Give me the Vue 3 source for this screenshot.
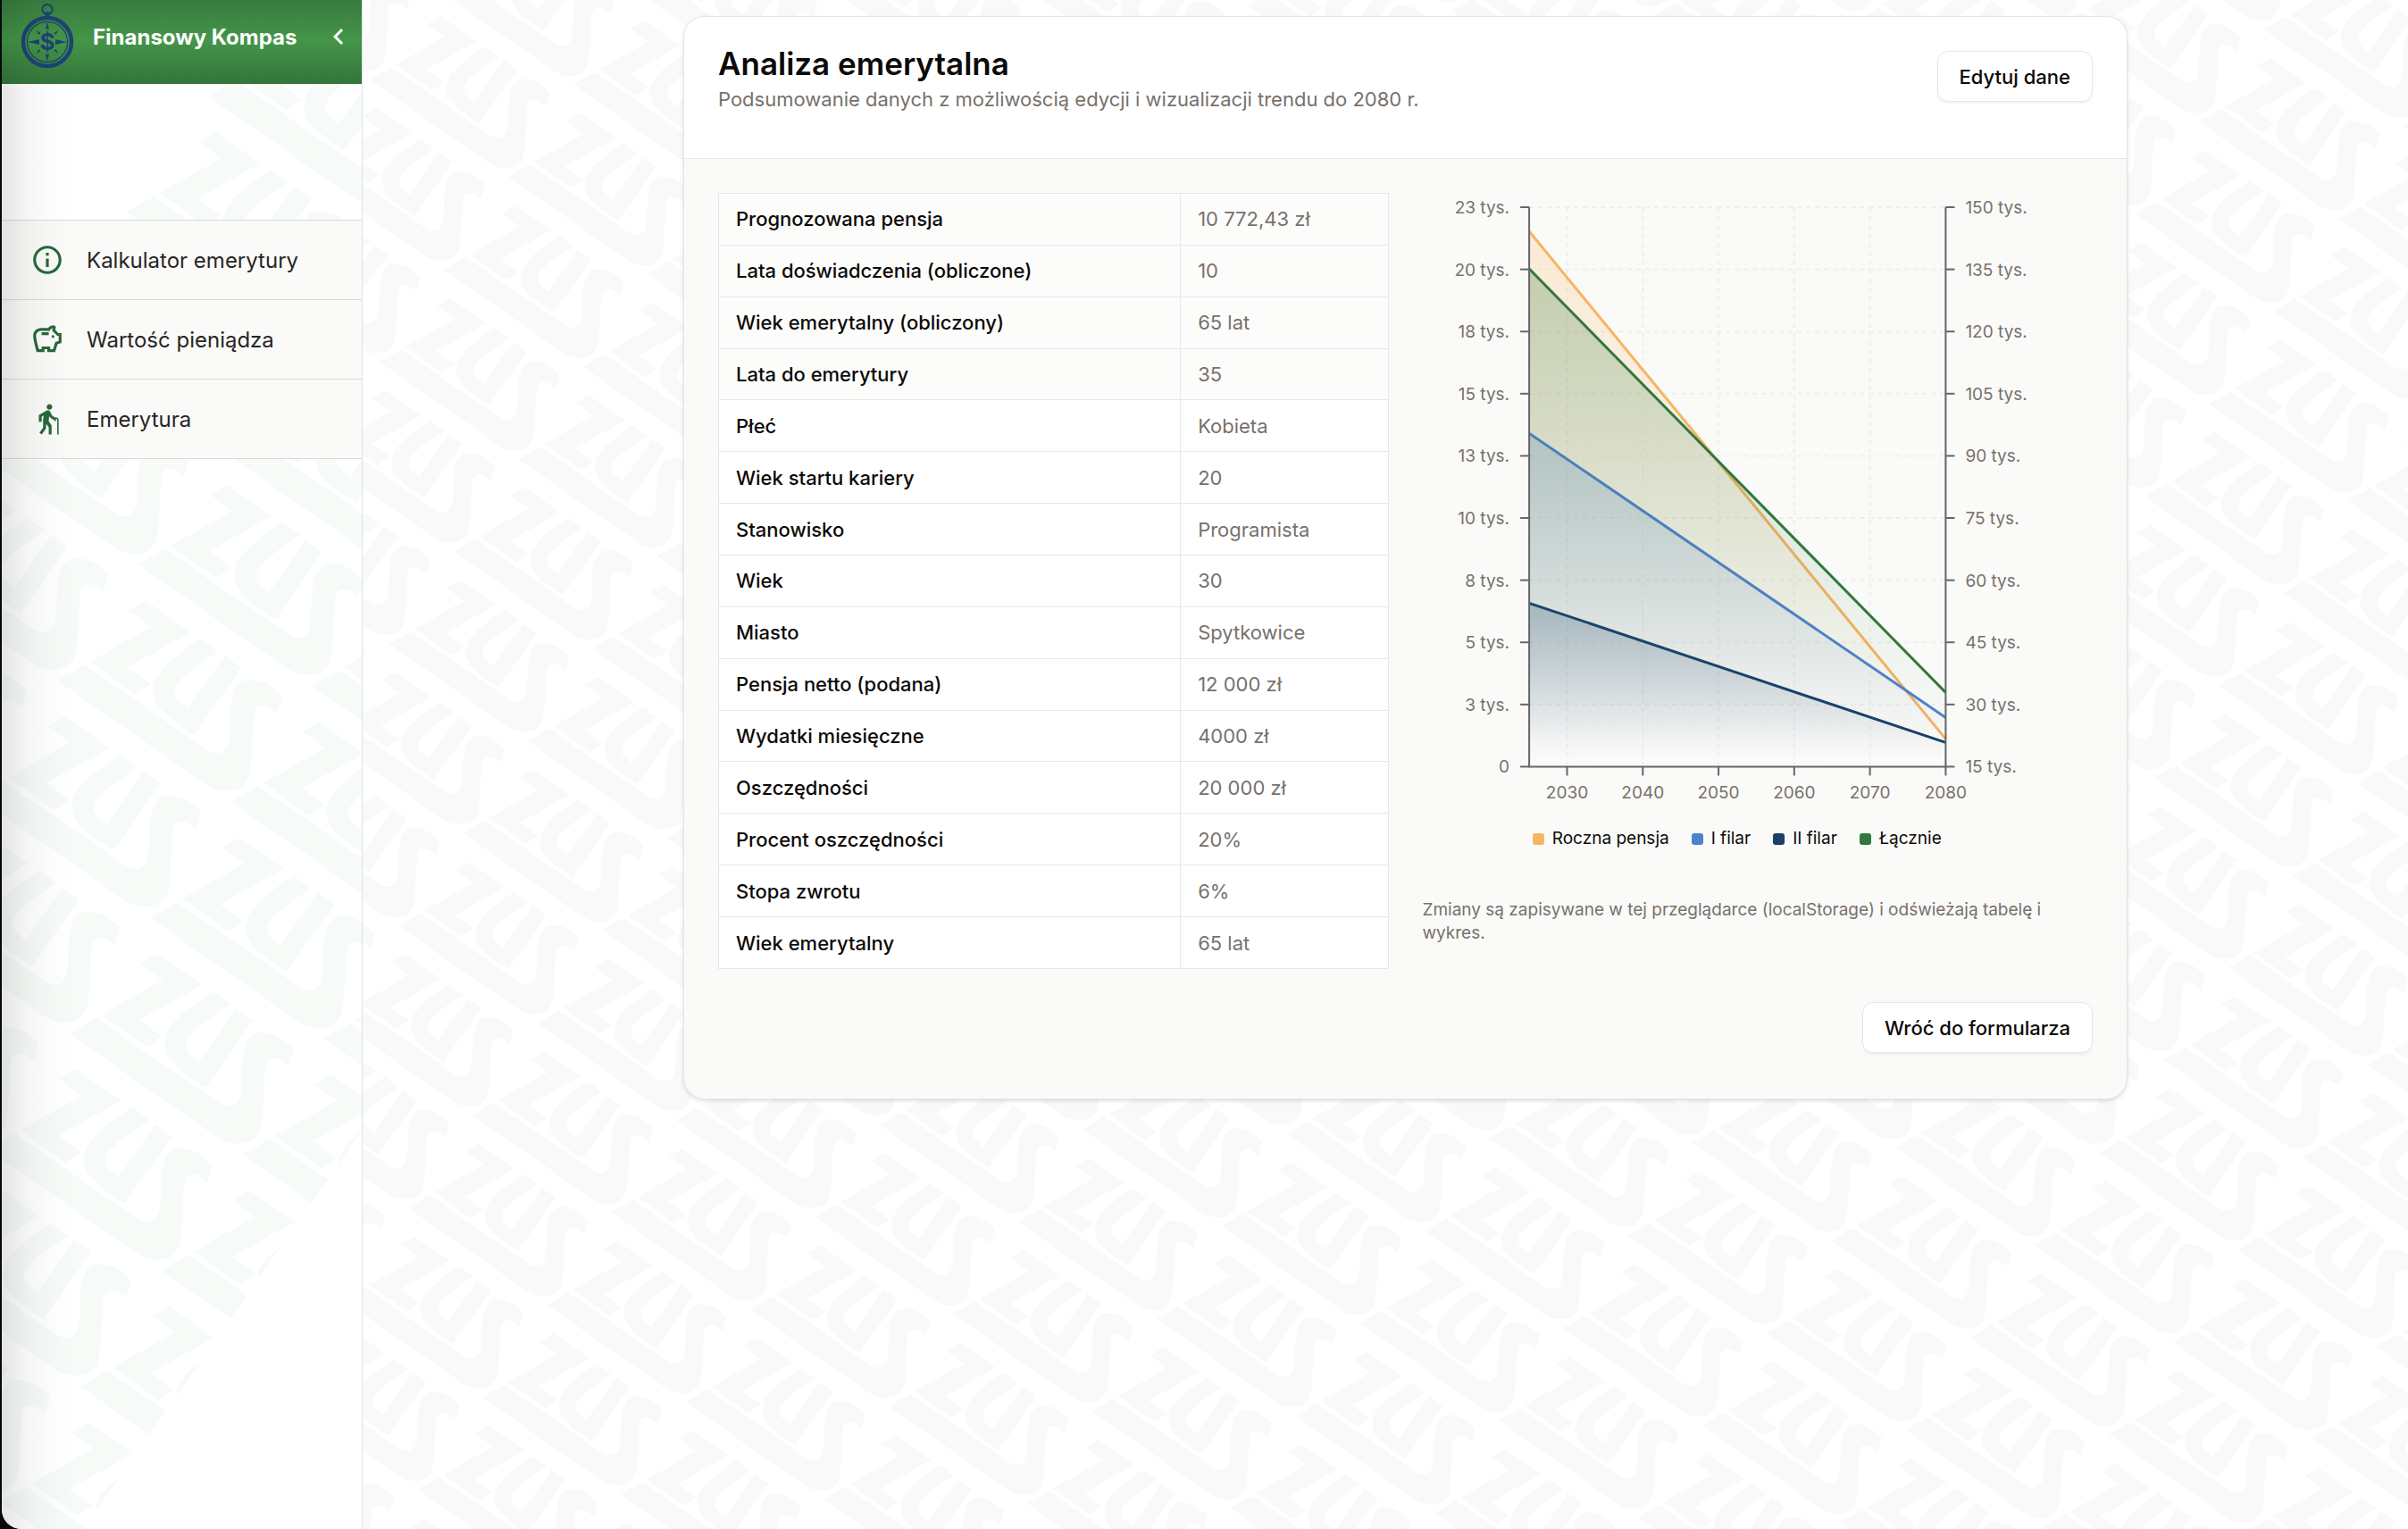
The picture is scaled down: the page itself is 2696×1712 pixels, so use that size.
<script setup>
const icons = {
  info: 'M11 7h2v2h-2zm0 4h2v6h-2zm1-9C6.48 2 2 6.48 2 12s4.48 10 10 10 10-4.48 10-10S17.52 2 12 2m0 18c-4.41 0-8-3.59-8-8s3.59-8 8-8 8 3.59 8 8-3.59 8-8 8',
  savings: 'M15 10c0-.55.45-1 1-1s1 .45 1 1-.45 1-1 1-1-.45-1-1m-7-1h5V7H8zm14-1.5v6.97l-2.82.94L17.5 21H12v-2h-2v2H4.5S2 12.54 2 9.5C2 6.46 4.46 4 7.5 4h5c.91-1.21 2.36-2 4-2 .83 0 1.5.67 1.5 1.5 0 .21-.04.4-.12.58-.14.34-.26.73-.32 1.15l2.27 2.27zm-2 2h-1L15.5 6c0-.65.09-1.29.26-1.91-.97.25-1.76.97-2.09 1.91H7.5C5.57 6 4 7.57 4 9.5c0 1.88 1.22 6.65 2.01 9.5H8v-2h6v2h2.01l1.55-5.15 2.44-.82z',
  elderly: 'M13.5 5.5c1.1 0 2-.9 2-2s-.9-2-2-2-2 .9-2 2 .9 2 2 2m6.5 7V23h-1V12.5c0-.28-.22-.5-.5-.5s-.5.22-.5.5v1h-1v-.69c-1.46-.38-2.7-1.29-3.51-2.52-.31.87-.49 1.78-.49 2.71 0 .23.02.46.03.69L15 16.5V23h-2v-5l-1.78-2.54L11 19l-3 4-1.6-1.2L9 18.33V13c0-1.15.18-2.29.5-3.39L8 10.46V14H6V9.3l5.4-3.07v.01c.59-.31 1.32-.33 1.94.03.36.21.63.51.8.85l.79 1.67C15.58 10.1 16.94 11 18.5 11c.83 0 1.5.67 1.5 1.5'
}

const menu = [
  { label: 'Kalkulator emerytury', icon: icons.info },
  { label: 'Wartość pieniądza', icon: icons.savings },
  { label: 'Emerytura', icon: icons.elderly }
]

const rows = [
  { label: 'Prognozowana pensja', value: '10 772,43 zł', computed: true },
  { label: 'Lata doświadczenia (obliczone)', value: '10', computed: true },
  { label: 'Wiek emerytalny (obliczony)', value: '65 lat', computed: true },
  { label: 'Lata do emerytury', value: '35', computed: true },
  { label: 'Płeć', value: 'Kobieta' },
  { label: 'Wiek startu kariery', value: '20' },
  { label: 'Stanowisko', value: 'Programista' },
  { label: 'Wiek', value: '30' },
  { label: 'Miasto', value: 'Spytkowice' },
  { label: 'Pensja netto (podana)', value: '12 000 zł' },
  { label: 'Wydatki miesięczne', value: '4000 zł' },
  { label: 'Oszczędności', value: '20 000 zł' },
  { label: 'Procent oszczędności', value: '20%' },
  { label: 'Stopa zwrotu', value: '6%' },
  { label: 'Wiek emerytalny', value: '65 lat' }
]

// Chart geometry in viewBox units
const plot = { left: 119, right: 585, top: 16, bottom: 642 }
const leftTicks = ['23 tys.', '20 tys.', '18 tys.', '15 tys.', '13 tys.', '10 tys.', '8 tys.', '5 tys.', '3 tys.', '0']
const rightTicks = ['150 tys.', '135 tys.', '120 tys.', '105 tys.', '90 tys.', '75 tys.', '60 tys.', '45 tys.', '30 tys.', '15 tys.']
const years = [2030, 2040, 2050, 2060, 2070, 2080]
const tickY = (i) => plot.top + ((plot.bottom - plot.top) * i) / 9
const yearX = (y) => plot.left + ((plot.right - plot.left) * (y - 2025)) / 55

const series = [
  { id: 'salary', name: 'Roczna pensja', color: '#f6b562', opacity: 0.22, from: 43, to: 611 },
  { id: 'pillar1', name: 'I filar', color: '#4f82cd', opacity: 0.25, from: 269, to: 587 },
  { id: 'pillar2', name: 'II filar', color: '#1a4069', opacity: 0.25, from: 459, to: 615 },
  { id: 'total', name: 'Łącznie', color: '#31783e', opacity: 0.25, from: 85, to: 559 }
]
const line = (s) => `M${plot.left} ${s.from}L${plot.right} ${s.to}`
const area = (s) => `${line(s)}V${plot.bottom}H${plot.left}Z`

// Oblique lattice of watermark marks
function lattice(ox, oy, ax, ay, bx, by, k0, k1, minX, maxX, firstColumn) {
  const out = []
  for (let k = k0; k <= k1; k++) {
    const start = Math.max(firstColumn, Math.floor((minX - ox - bx * k) / ax))
    const end = Math.ceil((maxX - ox - bx * k) / ax)
    for (let m = start; m <= end; m++) out.push({ x: ox + m * ax + k * bx, y: oy + m * ay + k * by })
  }
  return out
}
const pageMarks = lattice(587, 546, 227.6, 5.2, -72.3, 103.5, -8, 13, 200, 2900, -99)
const sideMarks = lattice(239, 148, 285.3, 6, -90.8, 129.7, -2, 13, -200, 560, 0)
</script>

<template>
  <div class="frame">
    <div class="window">
      <svg class="watermark" aria-hidden="true">
        <defs>
          <g id="mark">
            <path d="M0 0L-56 33L20 87L-188 204L-35 313L18 279L-61 223L152 104Z" />
            <path d="M187 127L245 169C170 222 97 265 97 307C97 330 120 345 142 362L265 185L322 224L163 450C70 390 25 355 25 300C28 240 90 190 187 127Z" />
            <path d="M-297 268L-206 216L205 500C245 527 280 510 283 455L286 375C290 300 310 264 352 264C395 264 430 290 459 321L441 379C425 362 408 352 392 352C372 352 364 365 362 400L354 550C350 610 325 640 270 639C240 638 215 626 195 612Z" />
          </g>
        </defs>
        <g class="page-marks">
          <use v-for="(p, i) in pageMarks" :key="i" href="#mark" :transform="`translate(${p.x - 2} ${p.y}) scale(.2665)`" />
        </g>
      </svg>

      <aside class="sidebar">
        <svg class="watermark" aria-hidden="true">
          <defs>
            <clipPath id="side-clip"><polygon points="0,0 1290,0 91,1712 0,1712" /></clipPath>
          </defs>
          <g class="side-marks" clip-path="url(#side-clip)">
            <use v-for="(p, i) in sideMarks" :key="i" href="#mark" :transform="`translate(${p.x} ${p.y}) scale(.333)`" />
          </g>
        </svg>

        <header class="brand">
          <svg class="compass" viewBox="0 0 62 76" aria-hidden="true">
            <g fill="none" stroke="#1b4373">
              <circle cx="31" cy="8.500" r="5.600" stroke-width="2" />
              <circle cx="31" cy="45" r="27" stroke-width="4.500" />
              <circle cx="31" cy="45" r="22.600" stroke-width="1.300" />
            </g>
            <g fill="#1b4373">
              <path d="M28 12.500q3-3 6 0l-1 5h-4z" />
              <path d="M31 22.500l2 8h-4zM31 67.500l2-9h-4zM9 45l13-3v6zM53 45l-13-3v6z" />
              <path d="M18.500 32l5 3-2 2zM43.500 32l-5 3 2 2zM18.500 58l5-3-2-2zM43.500 58l-5-3 2-2z" />
              <text class="dollar" x="31" y="54" text-anchor="middle">$</text>
            </g>
          </svg>
          <span class="brand-name">Finansowy Kompas</span>
          <button class="collapse" type="button" aria-label="Zwiń menu">
            <svg viewBox="0 0 24 24" aria-hidden="true"><path d="M15.410 7.410 14 6l-6 6 6 6 1.410-1.410L10.830 12z" /></svg>
          </button>
        </header>

        <nav class="menu">
          <a v-for="item in menu" :key="item.label" class="menu-item" href="#">
            <svg viewBox="0 0 24 24" aria-hidden="true"><path :d="item.icon" /></svg>
            <span>{{ item.label }}</span>
          </a>
        </nav>
        <div class="edge-shade"></div>
      </aside>

      <main class="main">
        <section class="card">
          <header class="card-head">
            <div>
              <h1>Analiza emerytalna</h1>
              <p>Podsumowanie danych z możliwością edycji i wizualizacji trendu do 2080 r.</p>
            </div>
            <button class="btn" type="button">Edytuj dane</button>
          </header>

          <div class="card-body">
            <div class="columns">
              <table>
                <tbody>
                  <tr v-for="row in rows" :key="row.label" :class="{ computed: row.computed }">
                    <th scope="row">{{ row.label }}</th>
                    <td>{{ row.value }}</td>
                  </tr>
                </tbody>
              </table>

              <div class="chart">
                <svg class="plot" viewBox="0 0 750 690" role="img" aria-label="Wykres trendu do 2080 r.">
                  <defs>
                    <linearGradient v-for="s in series" :id="s.id" :key="s.id" x1="0" y1="0" x2="0" y2="1">
                      <stop offset="5%" :stop-color="s.color" :stop-opacity="s.opacity" />
                      <stop offset="95%" :stop-color="s.color" stop-opacity="0" />
                    </linearGradient>
                  </defs>
                  <g class="grid">
                    <line v-for="(t, i) in leftTicks" :key="t" :x1="plot.left" :x2="plot.right" :y1="tickY(i)" :y2="tickY(i)" />
                    <line v-for="y in years" :key="y" :x1="yearX(y)" :x2="yearX(y)" :y1="plot.top" :y2="plot.bottom" />
                  </g>
                  <g v-for="s in series" :key="s.id">
                    <path :d="area(s)" :fill="`url(#${s.id})`" />
                    <path :d="line(s)" fill="none" :stroke="s.color" stroke-width="3" />
                  </g>
                  <g class="axis">
                    <path :d="`M${plot.left} ${plot.top}V${plot.bottom}H${plot.right}V${plot.top}`" />
                    <template v-for="(t, i) in leftTicks" :key="t">
                      <line :x1="plot.left - 10" :x2="plot.left" :y1="tickY(i)" :y2="tickY(i)" />
                      <line :x1="plot.right" :x2="plot.right + 10" :y1="tickY(i)" :y2="tickY(i)" />
                    </template>
                    <line v-for="y in years" :key="y" :x1="yearX(y)" :x2="yearX(y)" :y1="plot.bottom" :y2="plot.bottom + 10" />
                  </g>
                  <g class="labels">
                    <text v-for="(t, i) in leftTicks" :key="t" text-anchor="end" :x="plot.left - 22" :y="tickY(i) + 7">{{ t }}</text>
                    <text v-for="(t, i) in rightTicks" :key="t" :x="plot.right + 22" :y="tickY(i) + 7">{{ t }}</text>
                    <text v-for="y in years" :key="y" text-anchor="middle" :x="yearX(y)" :y="plot.bottom + 36">{{ y }}</text>
                  </g>
                </svg>
                <ul class="legend">
                  <li v-for="s in series" :key="s.id">
                    <i :style="{ background: s.color }"></i>{{ s.name }}
                  </li>
                </ul>
                <p class="note">Zmiany są zapisywane w tej przeglądarce (localStorage) i odświeżają tabelę i wykres.</p>
              </div>
            </div>

            <footer class="card-foot">
              <button class="btn" type="button">Wróć do formularza</button>
            </footer>
          </div>
        </section>
      </main>
    </div>
  </div>
</template>

<style>
body {
  margin: 0;
}
</style>

<style scoped>
* {
  box-sizing: border-box;
}
.frame {
  background: #08090b;
  padding-left: 2px;
  font-family: Inter, "Liberation Sans", sans-serif;
  color: #0c0a09;
}
.window {
  position: relative;
  display: flex;
  min-height: 100vh;
  overflow: hidden;
  background: #fff;
  border-bottom-left-radius: 22px;
}
.watermark {
  position: absolute;
  inset: 0;
  width: 100%;
  height: 100%;
}
.page-marks {
  fill: #f9f9f9;
}
.side-marks {
  fill: #f6fbf8;
}
.sidebar {
  position: relative;
  flex: none;
  width: 404px;
  background: #fff;
  border-right: 1px solid #e2e3e2;
  overflow: hidden;
}
.brand {
  position: relative;
  display: flex;
  align-items: center;
  height: 94px;
  padding: 0 8px 12px 20px;
  background: linear-gradient(#387c3f, #449549 48%, #33753b);
}
.compass {
  flex: none;
  width: 62px;
  height: 76px;
  margin: 0 20px 2px 0;
}
.dollar {
  font-size: 26px;
  font-weight: 700;
}
.brand-name {
  flex: 1;
  font-size: 24px;
  font-weight: 700;
  color: #fff;
  white-space: nowrap;
}
.collapse {
  display: flex;
  padding: 0;
  border: 0;
  background: none;
}
.collapse svg {
  width: 36px;
  height: 36px;
  fill: #fff;
}
.menu {
  position: relative;
  margin-top: 152px;
  border-top: 1px solid #d8dad8;
  background: #fafaf8;
}
.menu-item {
  display: flex;
  align-items: center;
  gap: 25px;
  height: 89px;
  padding-left: 32px;
  border-bottom: 1px solid #d8dad8;
  font-size: 24px;
  color: #292524;
  text-decoration: none;
}
.menu-item svg {
  width: 38px;
  height: 38px;
  fill: #27683a;
}
.edge-shade {
  position: absolute;
  inset: 0 auto 0 0;
  width: 80px;
  background: linear-gradient(90deg, rgba(0, 0, 0, 0.1), rgba(0, 0, 0, 0.04) 35%, rgba(0, 0, 0, 0.01) 70%, transparent);
  pointer-events: none;
}
.main {
  position: relative;
  flex: 1;
  padding: 18px 0 0 45px;
}
.card {
  max-width: 1617px;
  margin: 0 auto;
  border: 1px solid #e5e5e4;
  border-radius: 24px;
  background: #fafaf8;
  box-shadow: 0 2px 4px rgba(0, 0, 0, 0.12);
  overflow: hidden;
}
.card-head {
  display: flex;
  justify-content: space-between;
  align-items: flex-start;
  height: 159px;
  padding: 38px;
  background: #fff;
  border-bottom: 1px solid #e5e5e4;
}
h1 {
  margin: -4px 0 0;
  font-size: 35px;
  line-height: 36px;
  font-weight: 600;
}
.card-head p {
  margin: 6px 0 0;
  font-size: 22px;
  line-height: 32px;
  color: #78716c;
}
.btn {
  height: 57px;
  padding: 0 24px;
  border: 1px solid #e5e5e4;
  border-radius: 12px;
  background: #fff;
  box-shadow: 0 2px 3px rgba(0, 0, 0, 0.05);
  font: 500 22px Inter, "Liberation Sans", sans-serif;
  color: #0c0a09;
}
.card-body {
  padding: 38px 38px 51px;
}
.columns {
  display: grid;
  grid-template-columns: 1fr 1fr;
  align-items: start;
  gap: 38px;
}
table {
  width: 100%;
  height: 869px;
  border-collapse: collapse;
  table-layout: fixed;
  font-size: 22px;
  line-height: 32px;
  background: #fff;
}
.computed {
  background: #fcfcfb;
}
th,
td {
  padding: 12px 19px;
  border: 1px solid #e5e7eb;
  text-align: left;
}
th {
  width: 69%;
  font-weight: 500;
}
td {
  color: #78716c;
}
.plot {
  display: block;
  width: 100%;
}
.grid line {
  stroke: #efefed;
  stroke-width: 2;
  stroke-dasharray: 5 5;
}
.axis path,
.axis line {
  fill: none;
  stroke: #666;
  stroke-width: 2;
}
.labels text {
  font-size: 19px;
  fill: #78716c;
}
.legend {
  display: flex;
  justify-content: center;
  gap: 25px;
  margin: 21px 46px 0 0;
  padding: 0;
  list-style: none;
  font-size: 19px;
  line-height: 24px;
}
.legend li {
  display: flex;
  align-items: center;
  gap: 9px;
}
.legend i {
  width: 13px;
  height: 13px;
  border-radius: 3px;
}
.note {
  margin: 55px 0 0;
  font-size: 19px;
  line-height: 26px;
  color: #78716c;
}
.card-foot {
  display: flex;
  justify-content: flex-end;
  margin-top: 37px;
}
</style>
